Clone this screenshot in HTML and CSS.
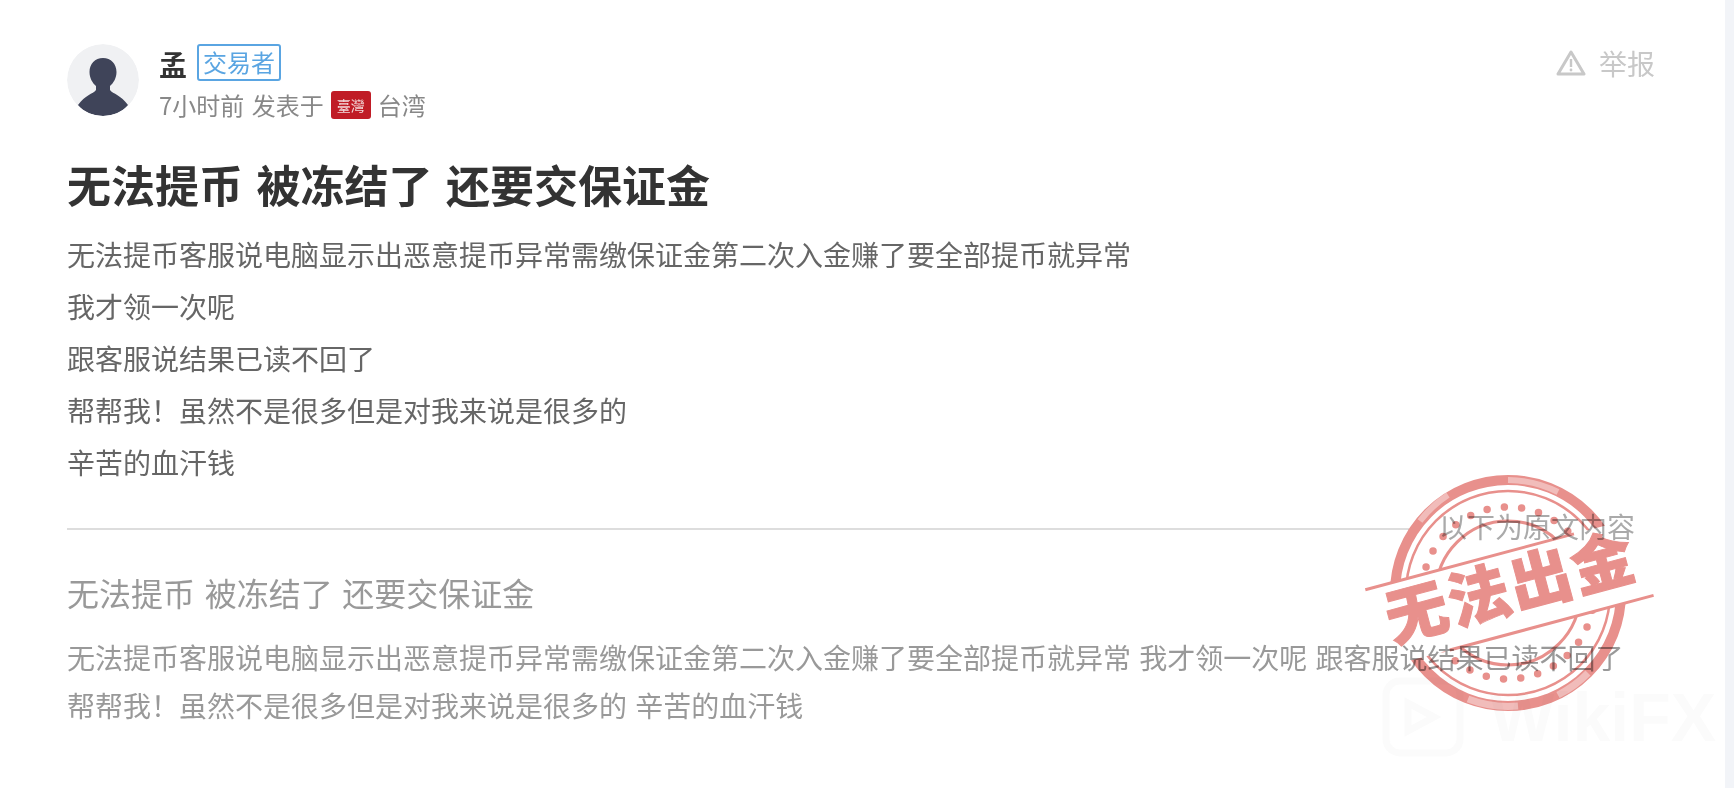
FILE: index.html
```html
<!DOCTYPE html>
<html lang="zh-CN">
<head>
    <meta charset="UTF-8">
    <title>无法提币 被冻结了 还要交保证金</title>
    <link rel="stylesheet" href="styles.css">
</head>
<body>
    <main class="post">
        <header class="post-head">
            <svg class="avatar" viewBox="0 0 72 72">
                <circle cx="36" cy="36" r="36" fill="#f0f1f3"/>
                <path d="M36 14c-8 0-13.500 6-13.500 14 0 6 3 11 6.500 14v4c-3 4-11 5-18 15 6 7 15 11 25 11s19-4 25-11c-7-10-15-11-18-15v-4c3.500-3 6.500-8 6.500-14 0-8-5.500-14-13.500-14z" fill="#3f4459"/>
            </svg>
            <div class="author">
                <div class="author-top">
                    <span class="name">孟</span>
                    <span class="badge">交易者</span>
                </div>
                <div class="meta">
                    <span class="meta-time">7小时前 发表于</span>
                    <span class="flag">臺灣</span>
                    <span>台湾</span>
                </div>
            </div>
            <a class="report">
                <svg class="report-icon" viewBox="0 0 30 28">
                    <path d="M15 3 L28 25 H2 Z" fill="none" stroke="#c8c8c8" stroke-width="3" stroke-linejoin="round"/>
                    <path d="M15 10v8" stroke="#c8c8c8" stroke-width="2.400"/>
                    <circle cx="15" cy="21" r="1.400" fill="#c8c8c8"/>
                </svg>
                <span>举报</span>
            </a>
        </header>

        <h1 class="title">无法提币 被冻结了 还要交保证金</h1>
        <div class="content">
            <p>无法提币客服说电脑显示出恶意提币异常需缴保证金第二次入金赚了要全部提币就异常</p>
            <p>我才领一次呢</p>
            <p>跟客服说结果已读不回了</p>
            <p>帮帮我！虽然不是很多但是对我来说是很多的</p>
            <p>辛苦的血汗钱</p>
        </div>

        <div class="divider"><span class="divider-label">以下为原文内容</span></div>

        <h2 class="orig-title">无法提币 被冻结了 还要交保证金</h2>
        <p class="orig-text">无法提币客服说电脑显示出恶意提币异常需缴保证金第二次入金赚了要全部提币就异常 我才领一次呢 跟客服说结果已读不回了 帮帮我！虽然不是很多但是对我来说是很多的 辛苦的血汗钱</p>

        <!-- watermark, very faint -->
        <div class="watermark">
            <svg class="watermark-logo" viewBox="0 0 82 80">
                <rect x="4" y="4" width="74" height="72" rx="14" fill="none" stroke="#fbfbfb" stroke-width="7"/>
                <path d="M26 26l26 14-26 14z" fill="none" stroke="#fbfbfb" stroke-width="7"/>
            </svg>
            <span>WikiFX</span>
        </div>

        <svg class="stamp" viewBox="0 0 300 300">
            <g fill="none" stroke="#e8908c">
                <circle cx="150" cy="150" r="113" stroke-width="10"/>
                <circle cx="150" cy="150" r="102" stroke-width="2.500"/>
                <circle cx="150" cy="150" r="86" stroke-width="7.500" stroke-linecap="round" stroke-dasharray="0 17.430"/>
                <circle cx="150" cy="150" r="72" stroke-width="3"/>
            </g>
            <g fill="none" stroke="#fff" opacity="0.4">
                <path d="M150 37a113 113 0 0 1 50 12" stroke-width="6"/>
                <path d="M62 78a113 113 0 0 1 28 -26" stroke-width="6"/>
                <path d="M230 230a113 113 0 0 1 -30 22" stroke-width="7"/>
                <path d="M110 256a113 113 0 0 0 50 7" stroke-width="7"/>
            </g>
            <g transform="rotate(-15 150 150)">
                <rect x="13" y="110" width="277" height="80" fill="#fff"/>
                <path d="M13 110H229M79 190H290" stroke="#e8908c" stroke-width="3"/>
                <text class="stamp-text" x="154" y="168" text-anchor="middle">无法出金</text>
            </g>
        </svg>
    </main>
</body>
</html>
```

FILE: styles.css
```css
* { box-sizing: border-box; }
html, body { height: 100%; }
body {
    margin: 0;
    overflow: hidden;
    background: #f2f4f8;
    font-family: "Noto Sans CJK SC", "Noto Sans", sans-serif;
}
.post {
    position: relative;
    width: 1725px;
    height: 788px;
    padding: 44px 70px 0 67px;
    background: #fff;
    overflow: hidden;
}

/* head */
.post-head { display: flex; align-items: flex-start; height: 72px; }
.avatar { width: 72px; height: 72px; flex: none; border-radius: 50%; }
.author { margin-left: 20px; }
.author-top { display: flex; align-items: center; height: 37px; }
.name { font-size: 28px; line-height: 37px; font-weight: 700; color: #333; width: 38px; padding-top: 4px; }
.badge {
    height: 37px;
    width: 84px;
    border: 2px solid #5aa5e2;
    border-radius: 3px;
    color: #5aa5e2;
    font-size: 24px;
    line-height: 31px;
    text-align: center;
}
.meta {
    display: flex;
    align-items: center;
    height: 28px;
    margin-top: 10px;
    gap: 7px;
    font-size: 24px;
    line-height: 28px;
    color: #888;
}
.meta-time { word-spacing: 2px; }
.flag {
    width: 40px;
    height: 28px;
    border-radius: 3px;
    background: #c01c26;
    color: #f3d9da;
    font-size: 14px;
    line-height: 28px;
    text-align: center;
}
.report {
    display: flex;
    align-items: center;
    gap: 13px;
    height: 38px;
    margin-left: auto;
    color: #c8c8c8;
    font-size: 28px;
}
.report-icon { width: 30px; height: 28px; }

/* post body */
.title {
    margin: 38px 0 14px;
    font-size: 44px;
    line-height: 60px;
    font-weight: 700;
    color: #333;
    word-spacing: 3.500px;
}
.content { font-size: 28px; line-height: 52px; color: #666; }
.content p { margin: 0; }

.divider {
    position: relative;
    height: 2px;
    margin-top: 40px;
    background: #ddd;
}
.divider-label {
    position: absolute;
    right: 0;
    top: -25px;
    padding: 0 20px 0 30px;
    background: #fff;
    color: #aaa;
    font-size: 28px;
    line-height: 46px;
}

.orig-title {
    margin: 40px 0 20px;
    font-size: 32px;
    line-height: 44px;
    font-weight: 400;
    color: #999;
    word-spacing: 2.500px;
}
.orig-text {
    width: 1580px;
    margin: 0;
    font-size: 28px;
    line-height: 47.5px;
    color: #999;
    word-spacing: 2px;
}

/* overlays */
.watermark {
    position: absolute;
    left: 1382px;
    top: 677px;
    display: flex;
    align-items: center;
    gap: 26px;
    color: #fbfbfb;
    font-family: "Liberation Sans", sans-serif;
    font-size: 68px;
    font-weight: 700;
    line-height: 80px;
}
.watermark-logo { width: 82px; height: 80px; }
.stamp {
    position: absolute;
    left: 1358px;
    top: 443px;
    width: 300px;
    height: 300px;
    overflow: visible;
    mix-blend-mode: multiply;
}
.stamp-text {
    fill: #e8908c;
    stroke: #e8908c;
    stroke-width: 1px;
    font-size: 62px;
    letter-spacing: 2px;
    font-weight: 900;
    font-family: "Noto Sans CJK SC", sans-serif;
}
```
